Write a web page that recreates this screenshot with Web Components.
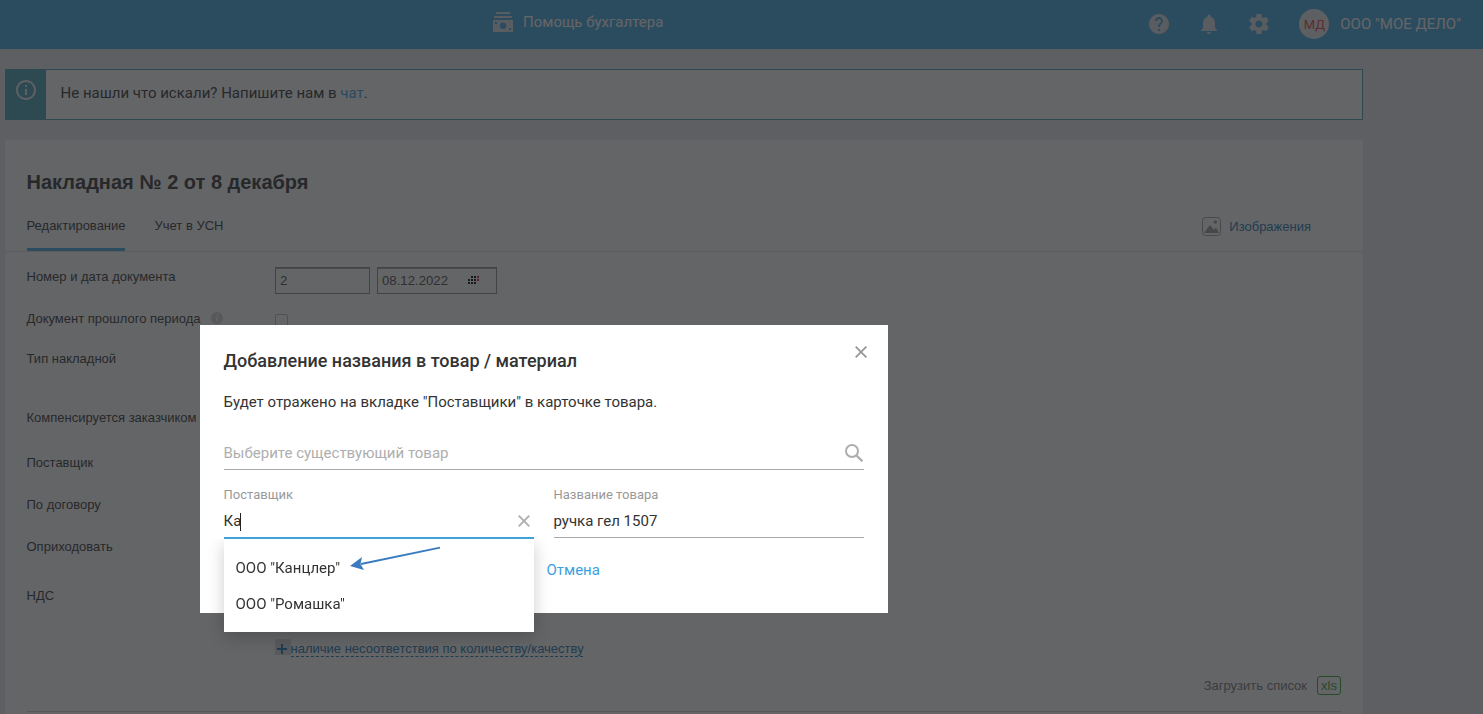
<!DOCTYPE html>
<html lang="ru">
<head>
<meta charset="utf-8">
<title>Накладная № 2</title>
<style>
  html, body {
    height: 100%;
  }
  body {
    margin: 0;
    overflow: hidden;
    background: #e9ecee;
    color: #333;
    font-family: "Liberation Sans", Arial, sans-serif;
    font-size: 13px;
  }
</style>
</head>
<body>
<app-header company='ООО "МОЕ ДЕЛО"' initials="МД">Помощь бухгалтера</app-header>
<info-banner>Не нашли что искали? Напишите нам в <a slot="link">чат</a></info-banner>
<waybill-card heading="Накладная № 2 от 8 декабря">
  <form-row style="margin-top: 4px" label="Номер и дата документа">
    <text-box style="width: 95px">2</text-box>
    <text-box style="width: 120px" calendar>08.12.2022</text-box>
  </form-row>
  <form-row style="margin-top: 2px" label="Документ прошлого периода" hint><check-box></check-box></form-row>
  <form-row label="Тип накладной"></form-row>
  <form-row style="margin-top: 19px" label="Компенсируется заказчиком"></form-row>
  <form-row style="margin-top: 5px" label="Поставщик"></form-row>
  <form-row style="margin-top: 2px" label="По договору"></form-row>
  <form-row style="margin-top: 2px" label="Оприходовать"></form-row>
  <form-row style="margin-top: 9px" label="НДС"></form-row>
</waybill-card>
<modal-dialog heading="Добавление названия в товар / материал">
  Будет отражено на вкладке "Поставщики" в карточке товара.
  <line-field slot="search" icon="search" placeholder="Выберите существующий товар"></line-field>
  <line-field slot="fields" label="Поставщик" value="Ка" icon="clear" active>
    <option-list slot="menu" options='["ООО \"Канцлер\"", "ООО \"Ромашка\""]'></option-list>
  </line-field>
  <line-field slot="fields" label="Название товара" value="ручка гел 1507"></line-field>
</modal-dialog>

<script>
class AppHeader extends HTMLElement {
  constructor() {
    super();

    this.attachShadow({ mode: "open" }).innerHTML = `
      <style>
        :host {
          display: flex;
          justify-content: space-between;
          box-sizing: border-box;
          height: 49px;
          padding: 0 22px 0 493px;
          background: #41a9e0;
          color: #fff;
          font: 15px/20px Roboto, sans-serif;
        }
        svg {
          display: block;
          fill: #d9e1e6;
        }
        .title, .tools {
          display: flex;
        }
        .title {
          gap: 10px;
          padding-top: 12px;
        }
        .tools {
          align-items: center;
          height: 47px;
        }
        .tools svg {
          margin-right: 26px;
        }
        .avatar {
          width: 30px;
          height: 30px;
          margin: 0 11px 0 2px;
          border-radius: 50%;
          background: #eaecee;
          color: #e0443e;
          font-size: 13px;
          line-height: 31px;
          text-align: center;
        }
      </style>
      <div class="title">
        <svg width="20" height="20" viewBox="0 0 20 20">
          <path fill-rule="evenodd" d="M3 0h14v2H3zM1 4h18v2H1zM0 8h20v12H0zM10 10.600a3.200 3.200 0 1 0 0 6.400 3.200 3.200 0 0 0 0-6.400zM2 10v2h2v-2zM16 16v2h2v-2z"/>
        </svg>
        <span><slot></slot></span>
      </div>
      <div class="tools">
        <svg width="24" height="24" viewBox="0 0 24 24"><path d="M12 2C6.480 2 2 6.480 2 12s4.480 10 10 10 10-4.480 10-10S17.520 2 12 2zm1 17h-2v-2h2v2zm2.070-7.750l-.9.920C13.450 12.900 13 13.500 13 15h-2v-.5c0-1.100.450-2.100 1.170-2.830l1.240-1.260c.370-.360.590-.860.590-1.410 0-1.100-.9-2-2-2s-2 .9-2 2H8c0-2.210 1.790-4 4-4s4 1.790 4 4c0 .880-.360 1.680-.930 2.250z"/></svg>
        <svg width="24" height="24" viewBox="0 0 24 24"><path d="M12 22c1.100 0 2-.9 2-2h-4c0 1.100.890 2 2 2zm6-6v-5c0-3.070-1.640-5.640-4.500-6.320V4c0-.830-.670-1.500-1.500-1.500s-1.500.670-1.500 1.500v.680C7.630 5.360 6 7.920 6 11v5l-2 2v1h16v-1l-2-2z"/></svg>
        <svg width="24" height="24" viewBox="0 0 24 24"><path d="M19.430 12.980c.040-.320.070-.640.070-.980s-.030-.660-.070-.980l2.110-1.650c.190-.150.240-.420.120-.640l-2-3.460c-.120-.220-.390-.3-.610-.220l-2.490 1c-.520-.4-1.080-.730-1.690-.980l-.380-2.650C14.460 2.180 14.250 2 14 2h-4c-.250 0-.460.180-.490.420l-.380 2.650c-.610.250-1.170.590-1.690.980l-2.490-1c-.230-.090-.490 0-.610.220l-2 3.460c-.130.220-.070.490.120.640l2.110 1.650c-.040.320-.070.650-.070.980s.030.660.070.980l-2.110 1.650c-.190.150-.240.420-.120.640l2 3.460c.120.220.390.3.610.220l2.490-1c.520.4 1.080.730 1.690.980l.380 2.650c.030.240.240.420.490.420h4c.250 0 .460-.180.490-.420l.380-2.650c.610-.250 1.170-.590 1.690-.980l2.490 1c.230.090.490 0 .610-.220l2-3.460c.120-.220.070-.490-.120-.640l-2.110-1.650zM12 15.500c-1.930 0-3.500-1.570-3.500-3.500s1.570-3.500 3.500-3.500 3.500 1.570 3.500 3.500-1.570 3.500-3.500 3.500z"/></svg>
        <div class="avatar">${this.getAttribute("initials")}</div>
        <span>${this.getAttribute("company")}</span>
      </div>
    `;
  }
}

class InfoBanner extends HTMLElement {
  constructor() {
    super();

    this.attachShadow({ mode: "open" }).innerHTML = `
      <style>
        :host {
          display: flex;
          box-sizing: border-box;
          width: 1358px;
          height: 51px;
          margin: 20px 0 20px 5px;
          border: 1px solid #47a3bd;
          background: #fff;
          font: 15px/20px Roboto, sans-serif;
        }
        .badge {
          width: 40px;
          padding-top: 8px;
          background: #47a3bd;
        }
        svg {
          display: block;
          margin-left: 8px;
          fill: #e9edf0;
        }
        p {
          margin: 13px 0 0 14.500px;
        }
        ::slotted(a) {
          color: #3ba1e0;
        }
      </style>
      <div class="badge">
        <svg width="24" height="24" viewBox="0 0 24 24"><path d="M11 17h2v-6h-2v6zm1-15C6.480 2 2 6.480 2 12s4.480 10 10 10 10-4.480 10-10S17.520 2 12 2zm0 18c-4.410 0-8-3.590-8-8s3.590-8 8-8 8 3.590 8 8-3.590 8-8 8zM11 9h2V7h-2v2z"/></svg>
      </div>
      <p><slot></slot><slot name="link"></slot>.</p>
    `;
  }
}

class WaybillCard extends HTMLElement {
  constructor() {
    super();

    this.attachShadow({ mode: "open" }).innerHTML = `
      <style>
        :host {
          display: block;
          box-sizing: border-box;
          width: 1358px;
          height: 574px;
          margin-left: 5px;
          padding-top: 30px;
          background: #fff;
        }
        h1 {
          margin: 0 0 0 21.500px;
          font-size: 20px;
          line-height: 24px;
        }
        nav {
          display: flex;
          box-sizing: border-box;
          height: 58px;
          padding: 15px 52px 0 22px;
          border-bottom: 1px solid #dfe1e2;
          line-height: 33px;
        }
        .tab {
          box-sizing: border-box;
          height: 42px;
          margin-right: 30px;
          text-indent: -0.500px;
          white-space: nowrap;
        }
        .tab.current {
          width: 98px;
          border-bottom: 3px solid #41a9e0;
        }
        .images {
          display: flex;
          align-items: center;
          gap: 8px;
          height: 34px;
          margin-left: auto;
          color: #1b75b1;
        }
        .mismatch {
          display: flex;
          align-items: flex-start;
          margin: 25px 0 0 270px;
          color: #1b75b1;
          line-height: 15px;
        }
        .mismatch svg {
          margin-top: -1px;
        }
        .mismatch span {
          width: 292px;
          height: 15px;
          margin-top: 1px;
          border-bottom: 1px dashed #1b75b1;
          text-indent: -0.500px;
          white-space: nowrap;
        }
        .load {
          display: flex;
          justify-content: flex-end;
          align-items: center;
          gap: 10px;
          margin: 19px 22px 0 22px;
          padding-bottom: 16px;
          border-bottom: 1px solid #d0d1d2;
          color: #777;
        }
        .xls {
          box-sizing: border-box;
          width: 24px;
          height: 19px;
          border: 1px solid #36a336;
          border-radius: 3px;
          color: #36a336;
          line-height: 17px;
          text-align: center;
        }
      </style>
      <h1>${this.getAttribute("heading")}</h1>
      <nav>
        <div class="tab current">Редактирование</div>
        <div class="tab">Учет в УСН</div>
        <div class="images">
          <svg width="19" height="19" viewBox="0 0 19 19">
            <rect x=".5" y=".5" width="18" height="18" rx="3" fill="none" stroke="#a0a0a0"/>
            <path d="M2 16l6-8 4 5 2-2.500 3 5.500z" fill="#999"/>
            <circle cx="13.300" cy="5" r="1.700" fill="#999"/>
          </svg>
          Изображения
        </div>
      </nav>
      <slot></slot>
      <div class="mismatch">
        <svg width="16" height="16" viewBox="0 0 16 16">
          <path d="M0 0h16v16H0z" fill="#d9dbdd"/>
          <path d="M7 5v10M2 10h10" stroke="#1b75b1" stroke-width="2"/>
        </svg>
        <span>наличие несоответствия по количеству/качеству</span>
      </div>
      <div class="load">Загрузить список<div class="xls">xls</div></div>
    `;
  }
}

class FormRow extends HTMLElement {
  constructor() {
    super();

    const hint = this.hasAttribute("hint")
      ? `<svg width="12" height="12" viewBox="0 0 12 12"><circle cx="6" cy="6" r="6" fill="#d2d3d4"/><path d="M6.800 2.300l-.2 1.200M6.300 4.700L5.500 9" stroke="#fff" stroke-width="1.300"/></svg>`
      : "";

    this.attachShadow({ mode: "open" }).innerHTML = `
      <style>
        :host {
          display: grid;
          grid-template-columns: 248.500px 1fr;
          height: 40px;
          padding-left: 21.500px;
        }
        .label, .controls {
          display: flex;
        }
        .label {
          align-items: center;
          gap: 10px;
          line-height: 18px;
          white-space: nowrap;
        }
        .label span {
          padding-top: 2px;
        }
        .controls {
          gap: 7px;
          padding-top: 11px;
        }
      </style>
      <div class="label"><span>${this.getAttribute("label")}</span>${hint}</div>
      <div class="controls"><slot></slot></div>
    `;
  }
}

class TextBox extends HTMLElement {
  constructor() {
    super();

    // three rows of dots, the last column marks the weekend
    let dots = "";
    for (let y = 0; y < 3; y++) {
      for (let x = y === 0 ? 1 : 0; x < 4; x++) {
        if (x === 3 && y === 2) continue;
        dots += `<rect x="${x * 3}" y="${y * 3}" width="2" height="2" fill="${x === 3 ? "#c8203a" : "#000"}"/>`;
      }
    }

    this.attachShadow({ mode: "open" }).innerHTML = `
      <style>
        :host {
          display: flex;
          align-items: center;
          justify-content: space-between;
          box-sizing: border-box;
          height: 27px;
          padding: 0 16px 0 4px;
          border: 1px solid #8e8e8e;
          box-shadow: inset 0 1px #a8a8a8;
          color: #4a4a4a;
          font-size: 13.200px;
          line-height: 24px;
        }
      </style>
      <slot></slot>
      ${this.hasAttribute("calendar") ? `<svg width="12" height="9">${dots}</svg>` : ""}
    `;
  }
}

class CheckBox extends HTMLElement {
  constructor() {
    super();

    this.attachShadow({ mode: "open" }).innerHTML = `
      <style>
        :host {
          box-sizing: border-box;
          width: 13px;
          height: 13px;
          margin-top: 5px;
          border: 1px solid #bbb;
          border-radius: 2px;
        }
      </style>
    `;
  }
}

class ModalDialog extends HTMLElement {
  constructor() {
    super();

    this.attachShadow({ mode: "open" }).innerHTML = `
      <style>
        :host {
          position: fixed;
          inset: 0;
          display: block;
          background: rgba(34, 36, 39, 0.7);
          font: 15px/24px Roboto, sans-serif;
        }
        .dialog {
          box-sizing: border-box;
          width: 688px;
          height: 288px;
          margin: 325px 0 0 200px;
          padding: 21px 24px 0;
          background: #fff;
        }
        header {
          display: flex;
          justify-content: space-between;
        }
        h2 {
          margin: 3px 0 0;
          font-size: 18px;
          font-weight: 500;
          line-height: 24px;
        }
        header svg {
          margin-right: -3px;
        }
        h2, p {
          text-indent: -0.500px;
        }
        p {
          margin: 17px 0 24px;
          height: 24px;
        }
        .fields {
          display: grid;
          grid-template-columns: 1fr 1fr;
          gap: 20px;
          margin-top: 16px;
        }
        .cancel {
          display: block;
          margin: 20px 0 0 322.500px;
          color: #3d9fdf;
        }
      </style>
      <div class="dialog">
        <header>
          <h2>${this.getAttribute("heading")}</h2>
          <svg width="12" height="12" viewBox="0 0 12 12"><path d="M.7.7l10.600 10.600M11.300.7L.7 11.300" stroke="#999" stroke-width="1.900"/></svg>
        </header>
        <p><slot></slot></p>
        <slot name="search"></slot>
        <div class="fields"><slot name="fields"></slot></div>
        <a class="cancel">Отмена</a>
      </div>
    `;
  }
}

class LineField extends HTMLElement {
  constructor() {
    super();

    const icons = {
      search: `<svg width="18" height="18" viewBox="0 0 18 18" style="margin-right: 1px"><circle cx="7" cy="7" r="6" stroke-width="2"/><path d="M11.200 11.200l6.100 6.100" stroke-width="2.300"/></svg>`,
      clear: `<svg width="12" height="12" viewBox="0 0 12 12" style="margin-right: 4px"><path d="M.7.7l10.600 10.600M11.300.7L.7 11.300" stroke-width="1.900"/></svg>`,
    };
    const label = this.getAttribute("label");
    const value = this.getAttribute("value");

    this.attachShadow({ mode: "open" }).innerHTML = `
      <style>
        :host {
          position: relative;
          display: block;
          height: 32px;
          text-indent: -0.500px;
        }
        :host([label]) {
          height: 52px;
        }
        label {
          display: block;
          height: 20px;
          color: #999;
          font-size: 13px;
          line-height: 18px;
        }
        .input {
          display: flex;
          align-items: center;
          box-sizing: border-box;
          height: 32px;
          border-bottom: 1px solid #aaa;
          line-height: 29px;
        }
        :host([active]) .input {
          height: 33px;
          border-bottom: 2px solid #3da2d8;
        }
        .placeholder {
          color: #aeaeae;
        }
        .caret {
          width: 1px;
          height: 18px;
          margin-left: -1px;
          background: #222;
        }
        svg {
          margin-left: auto;
          margin-bottom: 2px;
          fill: none;
          stroke: #aeaeae;
        }
      </style>
      ${label ? `<label>${label}</label>` : ""}
      <div class="input">
        ${value ? `<span>${value}</span>` : `<span class="placeholder">${this.getAttribute("placeholder")}</span>`}
        ${this.hasAttribute("active") ? `<span class="caret"></span>` : ""}
        ${icons[this.getAttribute("icon")] || ""}
      </div>
      <slot name="menu"></slot>
    `;
  }
}

class OptionList extends HTMLElement {
  constructor() {
    super();

    this.attachShadow({ mode: "open" }).innerHTML = `
      <style>
        :host {
          position: absolute;
          top: 53px;
          left: 0;
          display: block;
          box-sizing: border-box;
          width: 310px;
          height: 93px;
          padding: 11px 12px;
          background: #fff;
          box-shadow: 0 5px 16px rgba(0, 0, 0, 0.2);
          clip-path: inset(0 -30px -30px -30px);
          line-height: 36px;
        }
        svg {
          position: absolute;
          top: 7px;
          left: 125px;
        }
      </style>
      <svg width="92" height="26" viewBox="0 0 92 26">
        <path d="M91 1.700L12 18" stroke="#3a7bc0" stroke-width="1.800"/>
        <path d="M1 20l12-9-1.500 7L15 24z" fill="#3a7bc0"/>
      </svg>
    `;

    for (let option of JSON.parse(this.getAttribute("options"))) {
      const item = document.createElement("div");
      item.textContent = option;
      this.shadowRoot.append(item);
    }
  }
}

window.customElements.define("app-header", AppHeader);
window.customElements.define("info-banner", InfoBanner);
window.customElements.define("waybill-card", WaybillCard);
window.customElements.define("form-row", FormRow);
window.customElements.define("text-box", TextBox);
window.customElements.define("check-box", CheckBox);
window.customElements.define("option-list", OptionList);
window.customElements.define("line-field", LineField);
window.customElements.define("modal-dialog", ModalDialog);
</script>
</body>
</html>
